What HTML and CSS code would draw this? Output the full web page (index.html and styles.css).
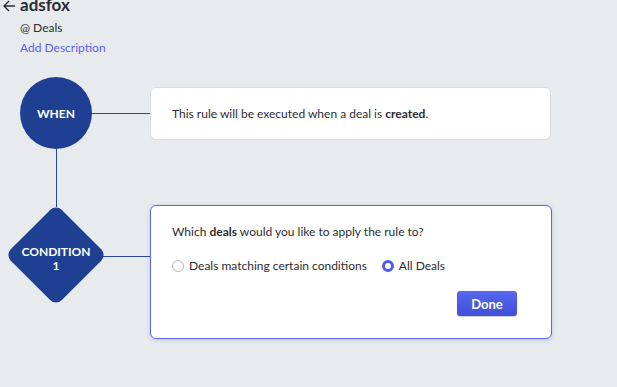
FILE: index.html
```html
<!DOCTYPE html>
<html lang="en">
<head>
    <meta charset="UTF-8">
    <title>adsfox - Workflow Rule</title>
    <link rel="stylesheet" href="styles.css">
</head>
<body>
    <!-- Header -->
    <div class="header">
        <div class="title-row">
            <span class="back-arrow">
                <svg width="13" height="12" viewBox="0 0 13 12"><path d="M12 6H1.5M6 1L1 6l5 5" fill="none" stroke="#2a2d33" stroke-width="1.4"/></svg>
            </span>
            <h1>adsfox</h1>
        </div>
        <div class="module">@ Deals</div>
        <a class="add-desc" href="#">Add Description</a>
    </div>

    <!-- Flow -->
    <div class="flow">
        <div class="step step-when">
            <div class="node-col">
                <div class="circle">WHEN</div>
            </div>
            <div class="card">
                <span>This rule will be executed when a deal is <b>created</b>.</span>
            </div>
        </div>

        <div class="v-line"></div>

        <div class="step step-condition">
            <div class="node-col">
                <div class="diamond"><span>CONDITION<br>1</span></div>
            </div>
            <div class="card card-active">
                <div class="question">Which <b>deals</b> would you like to apply the rule to?</div>
                <div class="options">
                    <label class="option"><span class="radio"></span>Deals matching certain conditions</label>
                    <label class="option"><span class="radio checked"></span>All Deals</label>
                </div>
                <div class="actions">
                    <button class="btn-done">Done</button>
                </div>
            </div>
        </div>
    </div>
</body>
</html>
```

FILE: styles.css
```css
body {
    font-family: 'Lato', sans-serif;
    margin: 0;
    padding: 0;
    background-color: #e8ebee;
    color: #2a2d33;
    height: 387px;
    overflow: hidden;
}
.header {
    padding-left: 3px;
    margin-top: -5px;
}
.title-row {
    display: flex;
    align-items: center;
    gap: 4px;
}
.back-arrow {
    display: flex;
    margin-top: 2px;
}
h1 {
    font-size: 17px;
    font-weight: 700;
    margin: 0;
    line-height: 20px;
}
.module {
    font-size: 12px;
    margin: 6px 0 0 17px;
    line-height: 14px;
}
.add-desc {
    display: block;
    font-size: 12px;
    color: #5b5ef0;
    text-decoration: none;
    margin: 6px 0 0 17px;
    line-height: 14px;
}
.flow {
    margin-top: 22px;
    padding-left: 8px;
}
.step {
    display: flex;
    position: relative;
}
.step::before {
    content: '';
    position: absolute;
    left: 48px;
    width: 100px;
    height: 1px;
    background-color: #2846a0;
}
.step-when {
    align-items: center;
}
.step-when::before {
    top: 36px;
}
.step-condition {
    align-items: flex-start;
    margin-top: -2px;
}
.step-condition::before {
    top: 51px;
}
.node-col {
    width: 96px;
    display: flex;
    justify-content: center;
    position: relative;
    z-index: 1;
    margin-right: 46px;
}
.circle {
    width: 72px;
    height: 72px;
    border-radius: 50%;
    background-color: #1f3f92;
    color: #fff;
    font-size: 12px;
    font-weight: 700;
    display: flex;
    align-items: center;
    justify-content: center;
}
.diamond {
    width: 96px;
    height: 96px;
    display: grid;
    place-items: center;
    margin-top: 2px;
}
.diamond::before {
    content: '';
    grid-area: 1 / 1;
    width: 72px;
    height: 72px;
    border-radius: 8px;
    background-color: #1f3f92;
    transform: rotate(45deg);
}
.diamond span {
    grid-area: 1 / 1;
    position: relative;
    top: 4px;
    color: #fff;
    font-size: 12px;
    font-weight: 700;
    text-align: center;
    line-height: 14px;
}
.v-line {
    width: 1px;
    height: 58px;
    background-color: #2846a0;
    margin-left: 48px;
}
.card {
    position: relative;
    z-index: 1;
    width: 401px;
    box-sizing: border-box;
    background-color: #fff;
    border: 1px solid #d8dbe2;
    border-radius: 6px;
    font-size: 12px;
    padding: 0 21px;
    height: 53px;
    display: flex;
    align-items: center;
}
.card b {
    font-weight: 700;
}
.card-active {
    display: block;
    height: 134px;
    width: 402px;
    border: 1.5px solid #5c66e8;
    box-shadow: 0 1px 4px rgba(60, 70, 200, 0.25);
    padding: 18px 21px 0;
}
.question {
    line-height: 16px;
}
.options {
    display: flex;
    gap: 15px;
    margin-top: 18px;
}
.option {
    display: flex;
    align-items: center;
    gap: 5px;
}
.radio {
    width: 10px;
    height: 10px;
    border: 1px solid #b4b8c2;
    border-radius: 50%;
    background: #fff;
}
.radio.checked {
    width: 6px;
    height: 6px;
    border: 3px solid #4d5be6;
}
.actions {
    display: flex;
    justify-content: flex-end;
    margin-top: 18px;
    padding-right: 13px;
}
.btn-done {
    width: 60px;
    height: 25px;
    border: none;
    border-radius: 3px;
    background: linear-gradient(#5568ee, #3e50d8);
    color: #fff;
    font-family: 'Lato', sans-serif;
    font-size: 13px;
    font-weight: 700;
    box-shadow: 0 1px 1px rgba(0, 0, 0, 0.2);
}
```
